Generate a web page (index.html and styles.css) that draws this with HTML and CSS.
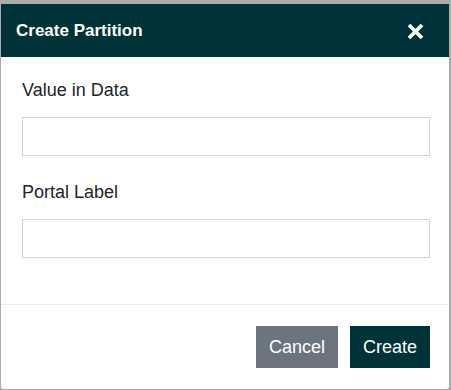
FILE: index.html
```html
<!DOCTYPE html>
<html>
<head>
<meta charset="utf-8">
<link rel="stylesheet" href="styles.css">
</head>
<body>
<div class="backdrop">
  <div class="modal">
    <div class="modal-header">
      <div class="modal-title">Create Partition</div>
      <button class="close" aria-label="Close">
        <svg width="17" height="17" viewBox="0 0 17 17"><path d="M2 2 L15 15 M15 2 L2 15" stroke="#fff" stroke-width="3.8" stroke-linecap="butt" fill="none"/></svg>
      </button>
    </div>
    <div class="modal-body">
      <div class="form-group">
        <label class="label">Value in Data</label>
        <input class="input" type="text">
      </div>
      <div class="form-group">
        <label class="label">Portal Label</label>
        <input class="input" type="text">
      </div>
    </div>
    <div class="modal-footer">
      <button class="btn btn-secondary">Cancel</button>
      <button class="btn btn-primary">Create</button>
    </div>
  </div>
</div>
</body>
</html>
```
FILE: styles.css
```css
html, body {
  margin: 0;
  padding: 0;
}
body {
  background: #acacac;
  font-family: "Liberation Sans", Arial, sans-serif;
  width: 451px;
  height: 390px;
  overflow: hidden;
}
.backdrop {
  padding: 4px 0 0 1px;
}
.modal {
  width: 448px;
  height: 385px;
  background: #fff;
  border-radius: 0 0 3px 3px;
  display: flex;
  flex-direction: column;
  overflow: hidden;
}
.modal-header {
  height: 53px;
  background: #003338;
  display: flex;
  align-items: center;
  justify-content: space-between;
  padding: 0 25px 0 15px;
  box-sizing: border-box;
}
.modal-title {
  color: #fff;
  font-weight: bold;
  font-size: 17px;
}
.close {
  background: none;
  border: 0;
  padding: 0;
  margin: 1px 0 0 0;
  display: flex;
  cursor: pointer;
}
.modal-body {
  padding: 20px 19px 23px 21px;
  flex: 1;
}
.form-group {
  margin-bottom: 23px;
}
.label {
  display: block;
  font-size: 18px;
  line-height: 27px;
  color: #212529;
  margin-bottom: 13px;
}
.input {
  display: block;
  width: 100%;
  height: 39px;
  box-sizing: border-box;
  border: 1px solid #ced4da;
  border-radius: 0;
  padding: 6px 12px;
  font-family: inherit;
  font-size: 18px;
  margin: 0;
}
.modal-footer {
  border-top: 1px solid #e9ecef;
  padding: 21px 19px 21px 21px;
  display: flex;
  justify-content: flex-end;
  gap: 12px;
}
.btn {
  height: 42px;
  border: 0;
  border-radius: 0;
  padding: 0 13px;
  font-family: inherit;
  font-size: 18px;
  color: #fff;
  cursor: pointer;
}
.btn-secondary {
  background: #6c757d;
  width: 82px;
}
.btn-primary {
  background: #003338;
  width: 80px;
}
```
